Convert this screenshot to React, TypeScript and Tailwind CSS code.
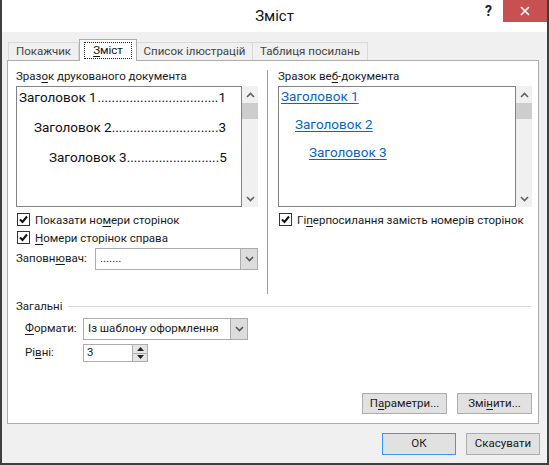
import React from "react";

const ui = { fontFamily: '"Roboto", "Noto Sans", sans-serif' };
const doc = { fontFamily: '"Roboto", "Liberation Sans", sans-serif' };

function U({ children }: { children: React.ReactNode }) {
  return <span className="underline decoration-1 underline-offset-[2px]">{children}</span>;
}

function ChevronDown({ color = "#555" }: { color?: string }) {
  return (
    <svg width="9" height="6" viewBox="0 0 9 6">
      <path d="M1 1 L4.5 4.5 L8 1" fill="none" stroke={color} strokeWidth="1.6" />
    </svg>
  );
}

function ChevronUp({ color = "#606060" }: { color?: string }) {
  return (
    <svg width="9" height="6" viewBox="0 0 9 6">
      <path d="M1 5 L4.5 1.5 L8 5" fill="none" stroke={color} strokeWidth="1.6" />
    </svg>
  );
}

function Check({ label }: { label: React.ReactNode }) {
  return (
    <div className="flex items-center h-[13px]">
      <div className="w-[13px] h-[13px] border border-[#333] bg-white flex items-center justify-center shrink-0">
        <svg width="9" height="9" viewBox="0 0 9 9">
          <path d="M1 4.5 L3.5 7 L8 1.5" fill="none" stroke="#111" strokeWidth="2" />
        </svg>
      </div>
      <span className="ml-[5px] leading-[16px] whitespace-nowrap">{label}</span>
    </div>
  );
}

function Combo({ value, width }: { value: string; width: string }) {
  return (
    <div className={`flex h-[22px] border border-[#acacac] bg-white ${width}`}>
      <div className="flex-1 pl-[4px] flex items-center whitespace-nowrap">{value}</div>
      <div className="w-[17px] border-l border-[#acacac] bg-[#dcdcdc] flex items-center justify-center">
        <ChevronDown />
      </div>
    </div>
  );
}

function Scroll() {
  return (
    <div className="w-[16px] bg-[#f0f0f0] flex flex-col">
      <div className="h-[17px] flex items-center justify-center">
        <ChevronUp />
      </div>
      <div className="h-[16px] bg-[#cdcdcd]" />
      <div className="flex-1" />
      <div className="h-[17px] flex items-center justify-center">
        <ChevronDown color="#606060" />
      </div>
    </div>
  );
}

function TocRow({ text, page, dots, indent }: { text: string; page: string; dots: number; indent: string }) {
  return (
    <div className={`flex h-[20px] leading-[20px] text-[13.5px] text-[#111] ${indent}`}>
      <span className="whitespace-nowrap">{text}</span>
      <span className="flex-1 text-right whitespace-nowrap">{".".repeat(dots)}</span>
      <span>{page}</span>
    </div>
  );
}

function Btn({ children, width, primary }: { children: React.ReactNode; width: string; primary?: boolean }) {
  return (
    <div
      className={`flex items-center justify-center bg-[#e1e1e1] border ${
        primary ? "border-[#3399ff]" : "border-[#adadad]"
      } ${width}`}
    >
      {children}
    </div>
  );
}

export default function App() {
  return (
    <div
      style={ui}
      className="w-[549px] h-[465px] flex flex-col bg-[#f0f0f0] border-l-2 border-r-2 border-b-2 border-[#3f3f3f] text-[11.5px] text-[#1a1a1a]"
    >
      {/* title bar */}
      <div className="h-[32px] bg-white flex shrink-0">
        <div className="flex-1" />
        <div className="pt-[6px] text-[15px] leading-[20px] text-[#111]">Зміст</div>
        <div className="flex-1 flex justify-end items-start">
          <div className="w-[29px] h-[22px] flex items-center justify-center text-[14px] font-bold text-[#222]">?</div>
          <div className="w-[44px] h-[22px] bg-[#c75050] flex items-center justify-center">
            <svg width="10" height="10" viewBox="0 0 10 10">
              <path d="M1 1 L9 9 M9 1 L1 9" stroke="#fff" strokeWidth="1.6" />
            </svg>
          </div>
        </div>
      </div>

      {/* body */}
      <div className="flex-1 flex flex-col pt-[7px] pl-[5px]">
        {/* tabs */}
        <div className="flex items-end h-[22px] ml-[1px] relative z-10 -mb-px">
          <div className="w-[71px] h-[18px] mb-px border border-b-0 border-[#d9d9d9] flex items-center justify-center text-[#444]">
            Покажчик
          </div>
          <div className="w-[58px] h-[22px] bg-white border border-b-0 border-[#adadad] flex items-start justify-center pt-[2px]">
            <div className="px-[8px] h-[17px] leading-[15px] border border-dotted border-[#222] text-[#111]">
              <U>З</U>міст
            </div>
          </div>
          <div className="w-[116px] h-[18px] mb-px border border-b-0 border-l-0 border-[#d9d9d9] flex items-center justify-center text-[#444]">
            Список ілюстрацій
          </div>
          <div className="w-[115px] h-[18px] mb-px border border-b-0 border-l-0 border-[#d9d9d9] flex items-center justify-center text-[#444]">
            Таблиця посилань
          </div>
        </div>

        {/* panel */}
        <div className="w-[532px] h-[364px] border border-[#adadad] bg-white flex flex-col">
          <div className="flex pt-[7px] pl-[8px]">
            {/* left column */}
            <div className="w-[242px] flex flex-col">
              <div className="h-[18px] leading-[16px]">
                Зраз<U>о</U>к друкованого документа
              </div>
              <div className="flex h-[121px]">
                <div style={doc} className="w-[226px] border border-[#828282] bg-white flex flex-col gap-[10px] pl-[2px] pr-[15px]">
                  <TocRow text="Заголовок 1 " page="1" dots={34} indent="" />
                  <TocRow text="Заголовок 2" page="3" dots={30} indent="pl-[15px]" />
                  <TocRow text="Заголовок 3" page="5" dots={26} indent="pl-[30px]" />
                </div>
                <Scroll />
              </div>
              <div className="mt-[6px] pl-px">
                <Check label={<>Показати но<U>м</U>ери сторінок</>} />
              </div>
              <div className="mt-[5px] pl-px">
                <Check label={<><U>Н</U>омери сторінок справа</>} />
              </div>
              <div className="mt-[4px] flex items-center h-[22px]">
                <span className="w-[79px]">
                  Заповн<U>ю</U>вач:
                </span>
                <Combo value="......." width="w-[163px]" />
              </div>
            </div>

            {/* separator */}
            <div className="ml-[9px] mt-[2px] w-px h-[224px] bg-[#a0a0a0]" />

            {/* right column */}
            <div className="ml-[10px] w-[254px] flex flex-col">
              <div className="h-[18px] leading-[16px]">
                Зразок ве<U>б</U>-документа
              </div>
              <div className="flex h-[121px]">
                <div
                  style={doc}
                  className="w-[238px] border border-[#828282] bg-white flex flex-col gap-[8px] pl-[2px] text-[13.5px] leading-[20px] text-[#0b63c5]"
                >
                  <div className="-mt-px">
                    <span className="underline decoration-1 underline-offset-[2px]">Заголовок 1</span>
                  </div>
                  <div className="pl-[14px]">
                    <span className="underline decoration-1 underline-offset-[2px]">Заголовок 2</span>
                  </div>
                  <div className="pl-[28px]">
                    <span className="underline decoration-1 underline-offset-[2px]">Заголовок 3</span>
                  </div>
                </div>
                <Scroll />
              </div>
              <div className="mt-[6px] pl-px">
                <Check label={<>Гі<U>п</U>ерпосилання замість номерів сторінок</>} />
              </div>
            </div>
          </div>

          {/* general group */}
          <div className="mt-[4px] pl-[8px] pr-[7px] flex items-center h-[16px]">
            <span className="leading-[16px]">Загальні</span>
            <div className="flex-1 ml-[5px] h-px bg-[#dcdcdc]" />
          </div>
          <div className="mt-[4px] pl-[17px] flex items-center h-[22px]">
            <span className="w-[58px]">
              <U>Ф</U>ормати:
            </span>
            <Combo value="Із шаблону оформлення" width="w-[165px]" />
          </div>
          <div className="mt-[4px] pl-[17px] flex items-center h-[18px]">
            <span className="w-[58px]">
              Рі<U>в</U>ні:
            </span>
            <div className="w-[65px] h-[18px] border border-[#acacac] bg-white flex">
              <div className="flex-1 pl-[3px] flex items-center">3</div>
              <div className="w-[15px] flex flex-col border-l border-[#acacac]">
                <div className="flex-1 bg-[#e5e5e5] border-b border-[#acacac] flex items-center justify-center">
                  <svg width="7" height="4" viewBox="0 0 7 4">
                    <path d="M0 4 L3.5 0 L7 4 Z" fill="#222" />
                  </svg>
                </div>
                <div className="flex-1 bg-[#e5e5e5] flex items-center justify-center">
                  <svg width="7" height="4" viewBox="0 0 7 4">
                    <path d="M0 0 L3.5 4 L7 0 Z" fill="#222" />
                  </svg>
                </div>
              </div>
            </div>
          </div>
          <div className="mt-auto pb-[9px] pr-[6px] flex justify-end gap-[10px]">
            <Btn width="w-[85px] h-[21px]">
              П<U>а</U>раметри...
            </Btn>
            <Btn width="w-[75px] h-[21px]">
              Змі<U>н</U>ити...
            </Btn>
          </div>
        </div>

        {/* dialog buttons */}
        <div className="mt-[9px] pr-[7px] flex justify-end gap-[10px]">
          <Btn width="w-[74px] h-[22px]" primary>
            ОК
          </Btn>
          <Btn width="w-[74px] h-[22px]">Скасувати</Btn>
        </div>
      </div>
    </div>
  );
}
